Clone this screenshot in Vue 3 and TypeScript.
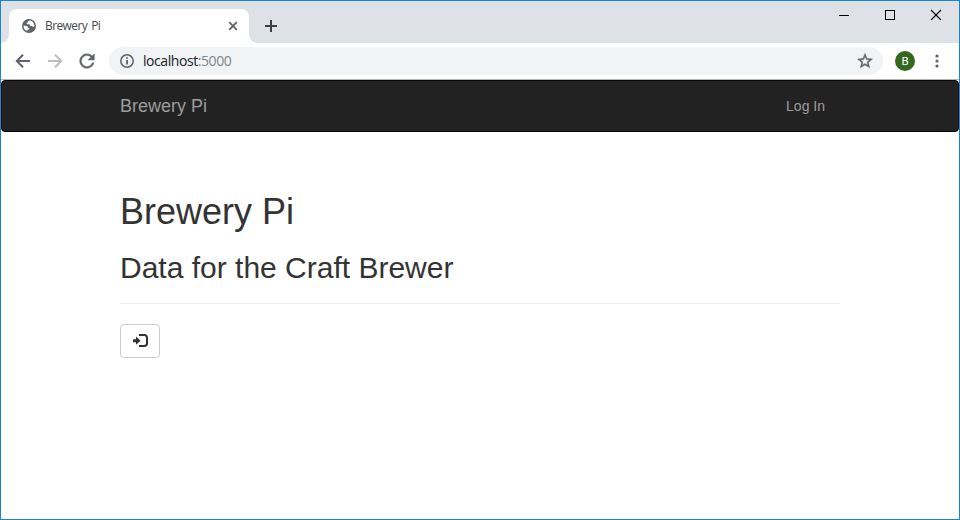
<script setup lang="ts">
import { ref } from 'vue'

const title = ref<string>('Brewery Pi')
const tagline = ref<string>('Data for the Craft Brewer')
const host = ref<string>('localhost')
const port = ref<string>(':5000')
</script>

<template>
  <div class="window">
    <header class="tabstrip">
      <div class="tab">
        <svg class="globe" viewBox="0 0 14 14">
          <circle cx="7" cy="7" r="7" fill="#5f6368" />
          <path d="M7.7 1.4 C5.6 2 6.2 3.6 4.8 3.7 C4.2 4.8 5 5.3 6.5 5.2 C8 5 8.2 6 8.1 7 C9 7.4 9.7 6.7 10.4 7.4 C11.1 8 11.9 7.8 12.5 7.3 C12.5 4 10.5 1.7 7.7 1.4 Z M1.5 6.5 L4.2 7 C5.5 7 6.1 7.8 6 8.8 C7.7 8.8 7.7 10 7 10.6 L5.3 10.8 V12.1 C2.8 11.3 1.3 9 1.5 6.5 Z" fill="#fff" />
        </svg>
        <span class="tab-title">{{ title }}</span>
        <svg class="tab-close" viewBox="0 0 10 10"><path d="M1.2 1.2 8.8 8.8M8.8 1.2 1.2 8.8" stroke="#5f6368" stroke-width="1.8" /></svg>
      </div>
      <svg class="plus" viewBox="0 0 12 12"><path d="M6 0V12M0 6H12" stroke="#3c4043" stroke-width="2" /></svg>
      <div class="controls">
        <svg viewBox="0 0 46 28"><path d="M18 14.5H28" stroke="#000" /></svg>
        <svg viewBox="0 0 46 28"><rect x="18.5" y="9.5" width="9" height="9" fill="none" stroke="#000" /></svg>
        <svg viewBox="0 0 46 28"><path d="M18 9 28 19M28 9 18 19" stroke="#000" stroke-width="1.1" /></svg>
      </div>
    </header>

    <div class="toolbar">
      <svg class="nav-icon" viewBox="0 0 22 22"><path d="M18 11H5.5M11 4.8 4.8 11 11 17.2" fill="none" stroke="#5f6368" stroke-width="2" /></svg>
      <svg class="nav-icon" viewBox="0 0 22 22"><path d="M4 11H16.5M11 4.8 17.2 11 11 17.2" fill="none" stroke="#babcbe" stroke-width="2" /></svg>
      <svg class="nav-icon" viewBox="0 0 24 24"><path d="M17.65 6.35C16.2 4.9 14.21 4 12 4c-4.42 0-7.99 3.58-7.99 8s3.57 8 7.99 8c3.73 0 6.84-2.55 7.73-6h-2.08c-.82 2.33-3.04 4-5.65 4-3.31 0-6-2.69-6-6s2.69-6 6-6c1.66 0 3.14.69 4.22 1.78L13 11h7V4l-2.35 2.35z" fill="#5f6368" stroke="#5f6368" stroke-width="0.4" /></svg>
      <div class="address">
        <svg class="info" viewBox="0 0 14 14">
          <circle cx="7" cy="7" r="6.2" fill="none" stroke="#5f6368" stroke-width="1.5" />
          <path d="M7 3.3V4.8M7 6V10.6" stroke="#5f6368" stroke-width="1.8" />
        </svg>
        <span class="url">{{ host }}<span class="port">{{ port }}</span></span>
        <svg class="star" viewBox="0 0 24 24"><path d="M22 9.24l-7.19-.62L12 2 9.19 8.63 2 9.24l5.46 4.73L5.82 21 12 17.27 18.18 21l-1.63-7.03L22 9.24zM12 15.4l-3.76 2.27 1-4.28-3.32-2.88 4.38-.38L12 6.1l1.71 4.04 4.38.38-3.32 2.88 1 4.28L12 15.4z" fill="#5f6368" stroke="#5f6368" stroke-width="0.6" /></svg>
      </div>
      <span class="avatar">B</span>
      <svg class="menu" viewBox="0 0 4 14"><g fill="#5f6368"><circle cx="2" cy="2" r="1.6" /><circle cx="2" cy="7" r="1.6" /><circle cx="2" cy="12" r="1.6" /></g></svg>
    </div>

    <nav class="navbar">
      <a class="brand">{{ title }}</a>
      <a class="login">Log In</a>
    </nav>

    <main class="content">
      <h1>{{ title }}</h1>
      <h2>{{ tagline }}</h2>
      <hr />
      <button class="btn" type="button" aria-label="Log In">
        <svg viewBox="0 0 16 14">
          <path d="M1 5.2H4V2.6L8.6 6.7 4 10.8V8.2H1Z" fill="#333" />
          <path d="M7 1H12.2Q15 1 15 3.8V9.2Q15 12 12.2 12H7" fill="none" stroke="#333" stroke-width="2" />
        </svg>
      </button>
    </main>
  </div>
</template>

<style>
body {
  margin: 0;
  background: #fff;
}
</style>

<style scoped>
.window {
  box-sizing: border-box;
  width: 960px;
  height: 520px;
  border: 1px solid #1883d7;
  background: #fff;
  overflow: hidden;
  font-family: "Liberation Sans", Arial, sans-serif;
}
svg {
  display: block;
  flex: none;
}
.tabstrip {
  display: flex;
  height: 42px;
  background: #dee1e6;
}
.tab {
  position: relative;
  box-sizing: border-box;
  display: flex;
  align-items: center;
  width: 240px;
  height: 34px;
  margin: 8px 0 0 8px;
  padding: 0 11px 0 13px;
  border-radius: 8px 8px 0 0;
  background: #fff;
}
.tab::before,
.tab::after {
  content: "";
  position: absolute;
  bottom: 0;
  width: 8px;
  height: 8px;
}
.tab::before {
  left: -8px;
  background: radial-gradient(circle at 0 0, transparent 7.5px, #fff 8px);
}
.tab::after {
  right: -8px;
  background: radial-gradient(circle at 100% 0, transparent 7.5px, #fff 8px);
}
.globe {
  width: 14px;
  height: 14px;
}
.tab-title {
  flex: 1;
  margin-left: 9px;
  font: 12px/16px "Open Sans", "Noto Sans", sans-serif;
  letter-spacing: -0.6px;
  word-spacing: 1.5px;
  color: #45494d;
}
.tab-close {
  width: 10px;
  height: 10px;
}
.plus {
  width: 12px;
  height: 12px;
  margin: 19px 0 0 16px;
}
.controls {
  display: flex;
  margin-left: auto;
}
.controls svg {
  width: 46px;
  height: 28px;
}
.toolbar {
  box-sizing: border-box;
  display: flex;
  align-items: center;
  height: 37px;
  padding: 0 20px 0 11px;
  border-bottom: 1px solid #b6b4b6;
}
.nav-icon {
  width: 22px;
  height: 22px;
  margin-right: 10px;
}
.address {
  box-sizing: border-box;
  display: flex;
  align-items: center;
  width: 774px;
  height: 28px;
  margin-left: 1px;
  padding: 0 9px 0 11px;
  border-radius: 14px;
  background: #f1f3f4;
}
.info {
  width: 14px;
  height: 14px;
}
.url {
  flex: 1;
  margin-left: 9px;
  font: 14px/20px "Open Sans", "Noto Sans", sans-serif;
  letter-spacing: -0.43px;
  color: #202124;
}
.port {
  color: #80868b;
}
.star {
  width: 18px;
  height: 18px;
}
.avatar {
  width: 20px;
  height: 20px;
  margin-left: 12px;
  border-radius: 50%;
  background: #33691e;
  color: #fff;
  font: 11.5px/21px Roboto, sans-serif;
  text-align: center;
}
.menu {
  width: 4px;
  height: 14px;
  margin-left: auto;
}
.navbar {
  box-sizing: border-box;
  display: flex;
  justify-content: space-between;
  align-items: center;
  height: 52px;
  padding: 0 133px 0 118px;
  border: 1px solid #080808;
  border-radius: 4px;
  background: #222;
  color: #9d9d9d;
}
.brand {
  font-size: 18px;
  line-height: 20px;
}
.login {
  font-size: 14px;
  line-height: 20px;
}
.content {
  width: 720px;
  padding: 60px 0 0 119px;
  color: #333;
}
h1,
h2 {
  margin: 0;
  font-weight: 500;
  line-height: 1.1;
}
h1 {
  font-size: 36px;
}
h2 {
  margin-top: 19px;
  font-size: 30px;
}
hr {
  height: 0;
  margin: 19px 0 20px;
  border: 0;
  border-top: 1px solid #eee;
}
.btn {
  box-sizing: border-box;
  display: flex;
  align-items: center;
  justify-content: center;
  width: 40px;
  height: 34px;
  padding: 0;
  border: 1px solid #ccc;
  border-radius: 4px;
  background: #fff;
}
.btn svg {
  width: 16px;
  height: 14px;
}
</style>
